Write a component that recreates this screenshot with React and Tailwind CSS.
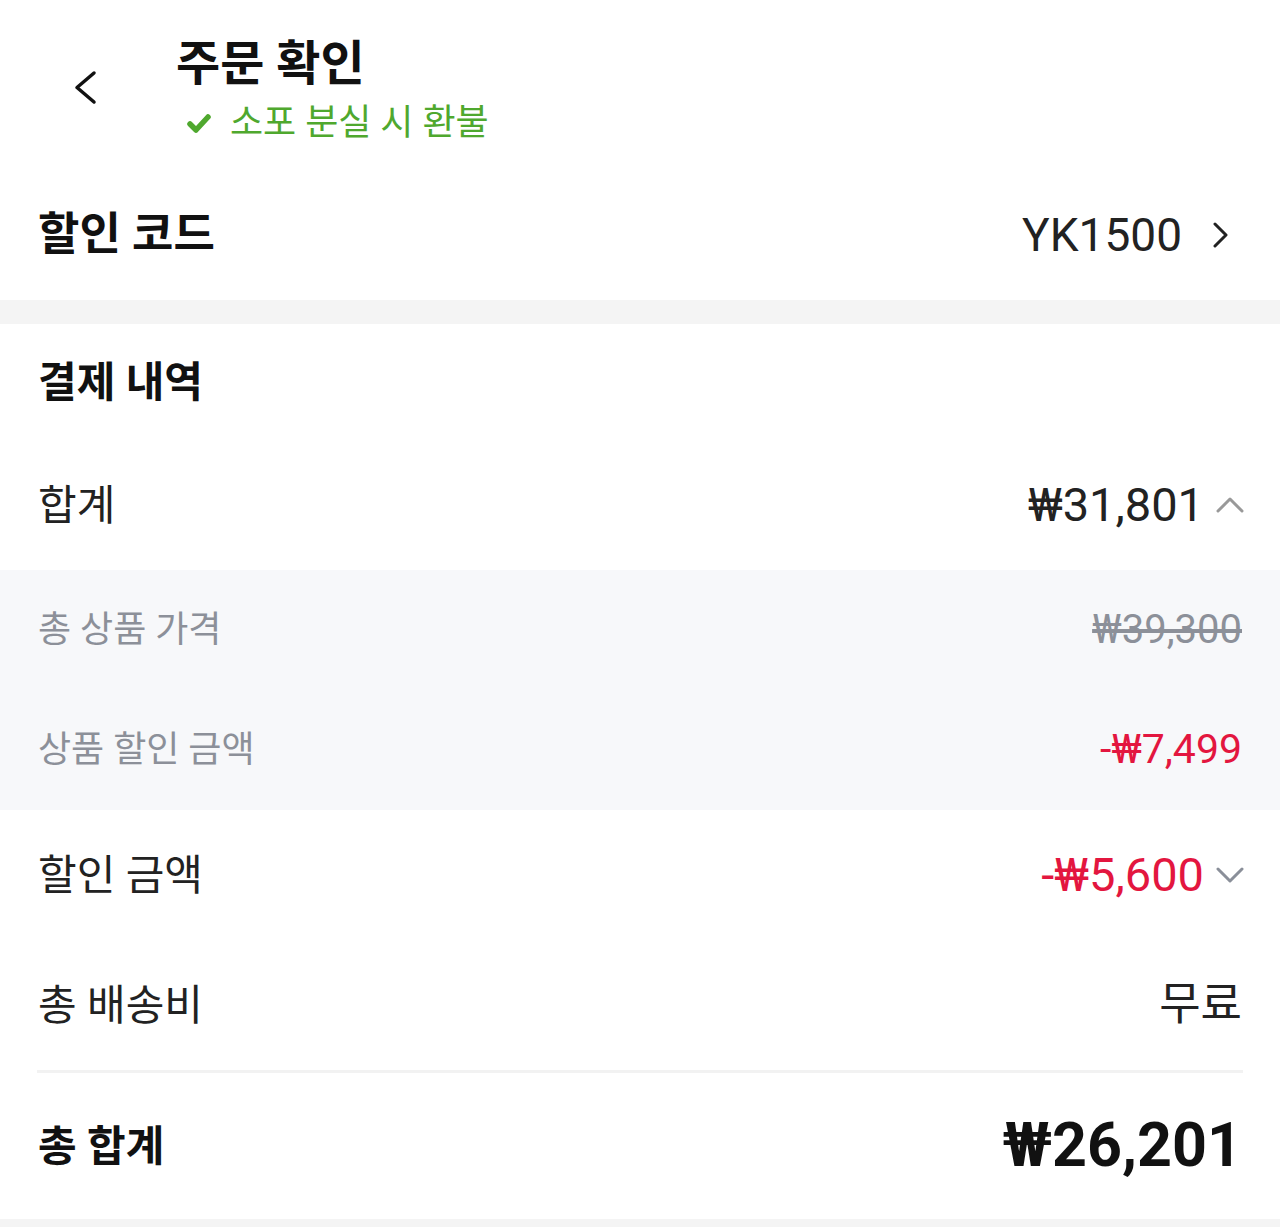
import React from "react";

const font = "font-['Roboto','Noto_Sans_CJK_KR',sans-serif]";

const ChevronRight = () => (
  <svg width="18" height="26" viewBox="0 0 18 26" fill="none" stroke="#222" strokeWidth="3" strokeLinecap="round" strokeLinejoin="round">
    <path d="M3 2 L14 13 L3 24" />
  </svg>
);

const ChevronUp = () => (
  <svg width="28" height="16" viewBox="0 0 28 16" fill="none" stroke="#999" strokeWidth="3" strokeLinecap="round" strokeLinejoin="round">
    <path d="M2 14 L14 2 L26 14" />
  </svg>
);

const ChevronDown = () => (
  <svg width="28" height="16" viewBox="0 0 28 16" fill="none" stroke="#8a8f99" strokeWidth="3" strokeLinecap="round" strokeLinejoin="round">
    <path d="M2 2 L14 14 L26 2" />
  </svg>
);

const Row = ({ label, children, className = "" }) => (
  <div className={`flex items-center justify-between px-[38px] ${className}`}>
    <span className="text-[42px] text-[#222]">{label}</span>
    {children}
  </div>
);

export default function App() {
  return (
    <div className={`w-[1280px] h-[1227px] bg-white ${font} overflow-hidden`}>
      {/* header */}
      <div className="flex h-[170px]">
        <div className="w-[176px] flex pt-[70px] pl-[73px]">
          <svg width="26" height="36" viewBox="0 0 26 36" fill="none" stroke="#111" strokeWidth="3.5" strokeLinecap="round" strokeLinejoin="round">
            <path d="M21 3 L4 17.5 L21 32" />
          </svg>
        </div>
        <div className="flex flex-col pt-[36px]">
          <span className="text-[48px] font-bold leading-[56px] text-[#111]">주문 확인</span>
          <div className="flex items-center gap-[18px] pl-[10px] mt-[9px]">
            <svg width="26" height="22" viewBox="0 0 26 22" fill="none" stroke="#4fa82e" strokeWidth="5.5" strokeLinecap="round" strokeLinejoin="round">
              <path d="M4 12 L10 18 L22 5" />
            </svg>
            <span className="text-[36px] leading-[44px] text-[#4fa82e]">소포 분실 시 환불</span>
          </div>
        </div>
      </div>

      {/* discount code */}
      <div className="flex items-center justify-between h-[130px] pl-[38px] pr-[50px]">
        <span className="text-[45px] font-bold text-[#111]">할인 코드</span>
        <div className="flex items-center gap-[30px]">
          <span className="text-[46px] text-[#222]">YK1500</span>
          <ChevronRight />
        </div>
      </div>

      <div className="h-[24px] bg-[#f4f4f4]" />

      {/* payment details */}
      <div className="flex items-center h-[116px] px-[38px]">
        <span className="text-[42px] font-bold text-[#111]">결제 내역</span>
      </div>

      <Row label="합계" className="h-[130px]">
        <div className="flex items-center gap-[12px] -mr-[2px]">
          <span className="text-[47px] text-[#222]">₩31,801</span>
          <ChevronUp />
        </div>
      </Row>

      <div className="bg-[#f7f8fa]">
        <div className="flex items-center justify-between h-[120px] px-[38px]">
          <span className="text-[36px] text-[#8c9099]">총 상품 가격</span>
          <span className="text-[40px] text-[#8c9099] line-through">₩39,300</span>
        </div>
        <div className="flex items-center justify-between h-[120px] px-[38px]">
          <span className="text-[36px] text-[#8c9099]">상품 할인 금액</span>
          <span className="text-[41px] text-[#e3163f]">-₩7,499</span>
        </div>
      </div>

      <Row label="할인 금액" className="h-[130px]">
        <div className="flex items-center gap-[12px] -mr-[2px]">
          <span className="text-[47px] text-[#e3163f]">-₩5,600</span>
          <ChevronDown />
        </div>
      </Row>

      <Row label="총 배송비" className="h-[130px]">
        <span className="text-[45px] text-[#222]">무료</span>
      </Row>

      <div className="mx-[37px] h-[3px] bg-[#f2f2f2]" />

      <div className="flex items-center justify-between h-[146px] px-[38px]">
        <span className="text-[42px] font-bold text-[#111]">총 합계</span>
        <span className="text-[61px] font-bold text-[#111]">₩26,201</span>
      </div>

      <div className="h-[8px] bg-[#f4f4f4]" />
    </div>
  );
}
